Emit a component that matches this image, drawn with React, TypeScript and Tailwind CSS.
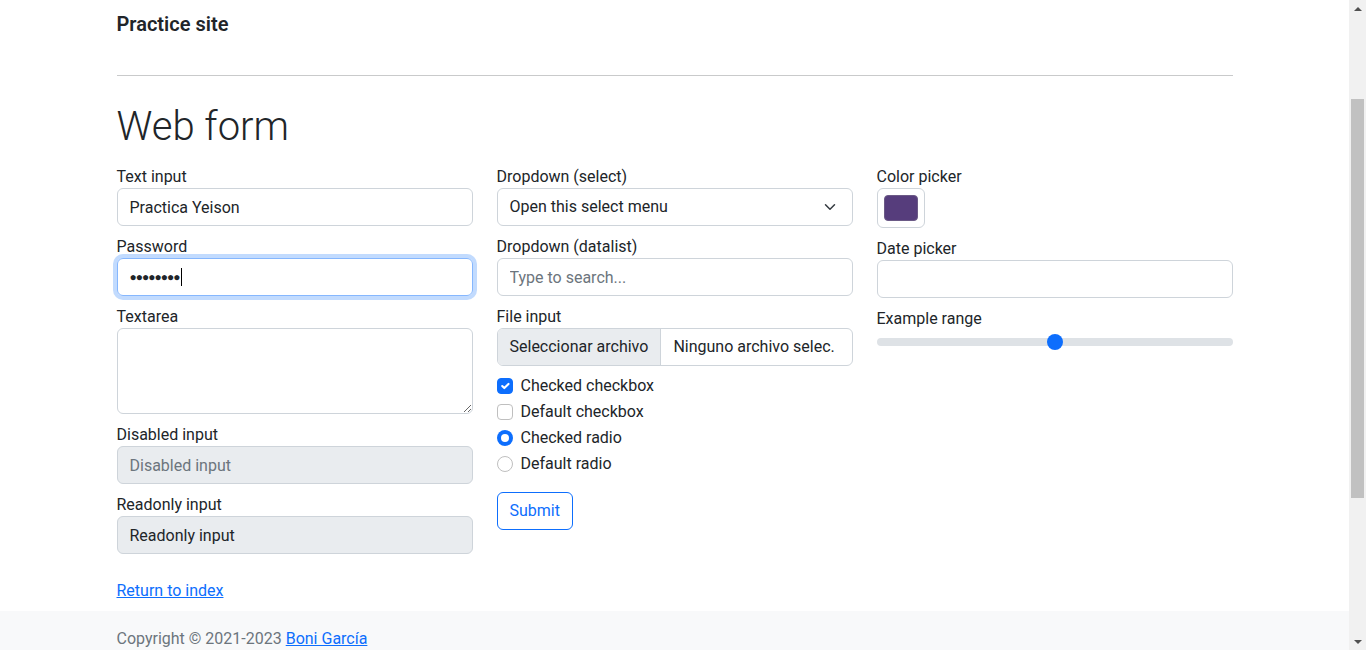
import { useState } from 'react';

const font = '"Segoe UI", Roboto, "Liberation Sans", sans-serif';

// Bootstrap-like chevron used in the select
const Chevron = () => (
  <svg width="16" height="12" viewBox="0 0 16 16" fill="none" xmlns="http://www.w3.org/2000/svg">
    <path d="m2 5 6 6 6-6" stroke="#343a40" strokeWidth="2" strokeLinecap="round" strokeLinejoin="round" />
  </svg>
);

const CheckMark = () => (
  <svg width="16" height="16" viewBox="0 0 20 20" fill="none" xmlns="http://www.w3.org/2000/svg">
    <path d="m6 10 3 3 6-6" stroke="#fff" strokeWidth="3" strokeLinecap="round" strokeLinejoin="round" />
  </svg>
);

const Label = ({ children }: { children: React.ReactNode }) => (
  <div className="h-6 pt-px leading-[23px] text-[16px] text-[#212529]">{children}</div>
);

const inputBase =
  'block w-full h-[38px] rounded-[6px] border border-[#ced4da] px-3 text-[16px] leading-6 text-[#212529] outline-none';

const Scrollbar = () => (
  <div className="w-[17px] h-full bg-[#f1f1f1] flex flex-col shrink-0">
    <div className="h-[17px] flex items-center justify-center">
      <div className="w-0 h-0 border-l-[4px] border-r-[4px] border-b-[4px] border-l-transparent border-r-transparent border-b-[#505050]" />
    </div>
    <div className="flex-1 flex flex-col px-[2px]">
      <div className="h-[82px]" />
      <div className="h-[399px] bg-[#c1c1c1]" />
      <div className="flex-1" />
    </div>
    <div className="h-[17px] flex items-center justify-center">
      <div className="w-0 h-0 border-l-[4px] border-r-[4px] border-t-[4px] border-l-transparent border-r-transparent border-t-[#505050]" />
    </div>
  </div>
);

const App = () => {
  const [text, setText] = useState('Practica Yeison');
  const [range, setRange] = useState(5);

  return (
    <div className="flex h-[650px] w-full overflow-hidden bg-white" style={{ fontFamily: font }}>
      <div className="flex-1 min-w-0 flex flex-col">
        <div className="w-full max-w-[1140px] mx-auto px-3">
          {/* Header */}
          <div className="pt-3 h-9 leading-6 text-[20px] font-semibold text-[#212529]">Practice site</div>
          <hr className="mt-[39px] border-0 border-t border-[#c9cacb]" />

          <h1 className="mt-[27px] text-[40px] font-light leading-[48px] text-[#212529]">Web form</h1>

          {/* Form grid */}
          <form className="mt-[13px] grid grid-cols-3 gap-6" onSubmit={(e) => e.preventDefault()}>
            {/* Column 1 */}
            <div className="flex flex-col gap-2">
              <div>
                <Label>Text input</Label>
                <input className={`${inputBase} bg-white`} value={text} onChange={(e) => setText(e.target.value)} />
              </div>
              <div>
                <Label>Password</Label>
                <div className="flex items-center h-[38px] rounded-[6px] border border-[#86b7fe] px-3 text-[16px] text-[#212529] shadow-[0_0_0_4px_rgba(13,110,253,0.25)]">
                  <span className="tracking-[-1px] text-[12px]">●●●●●●●●</span>
                  <span className="ml-[2px] w-px h-[18px] bg-black" />
                </div>
              </div>
              <div>
                <Label>Textarea</Label>
                <textarea className="block w-full h-[86px] rounded-[6px] border border-[#ced4da] bg-white px-3 py-[6px] text-[16px] outline-none" />
              </div>
              <div>
                <Label>Disabled input</Label>
                <input
                  className={`${inputBase} bg-[#e9ecef] placeholder:text-[#6c757d]`}
                  placeholder="Disabled input"
                  disabled
                />
              </div>
              <div>
                <Label>Readonly input</Label>
                <input className={`${inputBase} bg-[#e9ecef]`} value="Readonly input" readOnly />
              </div>
            </div>

            {/* Column 2 */}
            <div className="flex flex-col">
              <div>
                <Label>Dropdown (select)</Label>
                <div className="flex items-center justify-between h-[38px] rounded-[6px] border border-[#ced4da] pl-3 pr-[14px] text-[16px] text-[#212529]">
                  <span>Open this select menu</span>
                  <Chevron />
                </div>
              </div>
              <div className="mt-2">
                <Label>Dropdown (datalist)</Label>
                <input className={`${inputBase} bg-white placeholder:text-[#6c757d]`} placeholder="Type to search..." />
              </div>
              <div className="mt-2">
                <Label>File input</Label>
                <div className="flex h-[38px] rounded-[6px] border border-[#ced4da] overflow-hidden text-[16px] text-[#212529]">
                  <div className="flex items-center px-3 bg-[#e9ecef] border-r border-[#ced4da] whitespace-nowrap">Seleccionar archivo</div>
                  <div className="flex items-center px-3 whitespace-nowrap">Ninguno archivo selec.</div>
                </div>
              </div>

              <div className="mt-2 flex flex-col gap-[2px]">
                <div className="flex items-center h-6 text-[16px] text-[#212529]">
                  <span className="w-4 h-4 rounded-[4px] bg-[#0d6efd] border border-[#0d6efd] flex items-center justify-center">
                    <CheckMark />
                  </span>
                  <span className="ml-2">Checked checkbox</span>
                </div>
                <div className="flex items-center h-6 text-[16px] text-[#212529]">
                  <span className="w-4 h-4 rounded-[4px] border border-[#bfbfbf] bg-white" />
                  <span className="ml-2">Default checkbox</span>
                </div>
                <div className="flex items-center h-6 text-[16px] text-[#212529]">
                  <span className="w-4 h-4 rounded-full bg-[#0d6efd] flex items-center justify-center">
                    <span className="w-2 h-2 rounded-full bg-white" />
                  </span>
                  <span className="ml-2">Checked radio</span>
                </div>
                <div className="flex items-center h-6 text-[16px] text-[#212529]">
                  <span className="w-4 h-4 rounded-full border border-[#bfbfbf] bg-white" />
                  <span className="ml-2">Default radio</span>
                </div>
              </div>

              <div className="mt-4">
                <button
                  type="submit"
                  className="h-[38px] px-3 rounded-[6px] border border-[#0d6efd] text-[#0d6efd] text-[16px] bg-white"
                >
                  Submit
                </button>
              </div>
            </div>

            {/* Column 3 */}
            <div className="flex flex-col">
              <div>
                <Label>Color picker</Label>
                <div className="w-12 h-10 rounded-[6px] border border-[#ced4da] p-[6px]">
                  <div className="w-full h-full rounded-[4px] bg-[#563d7c] border border-[#6b5a86]" />
                </div>
              </div>
              <div className="mt-2">
                <Label>Date picker</Label>
                <div className="h-[38px] rounded-[6px] border border-[#ced4da]" />
              </div>
              <div className="mt-2">
                <Label>Example range</Label>
                <div className="h-6 flex items-center">
                  <div className="relative w-full h-2 rounded-full bg-[#dee2e6]">
                    <input
                      type="range"
                      min={0}
                      max={10}
                      value={range}
                      onChange={(e) => setRange(Number(e.target.value))}
                      className="absolute inset-0 w-full opacity-0"
                    />
                    <div
                      className="absolute top-1/2 -translate-y-1/2 -translate-x-1/2 w-4 h-4 rounded-full bg-[#0d6efd]"
                      style={{ left: `calc(8px + (100% - 16px) * ${range / 10})` }}
                    />
                  </div>
                </div>
              </div>
            </div>
          </form>

          <div className="mt-[24px] h-6 pt-px leading-[23px] text-[16px]">
            <a href="#" className="text-[#0d6efd] underline">Return to index</a>
          </div>
        </div>

        {/* Footer */}
        <div className="mt-[9px] flex-1 bg-[#f8f9fa]">
          <div className="max-w-[1140px] mx-auto px-3 pt-4 text-[16px] leading-6 text-[#6c757d]">
            Copyright © 2021-2023 <a href="#" className="text-[#0d6efd] underline">Boni García</a>
          </div>
        </div>
      </div>
      <Scrollbar />
    </div>
  );
};

export default App;
